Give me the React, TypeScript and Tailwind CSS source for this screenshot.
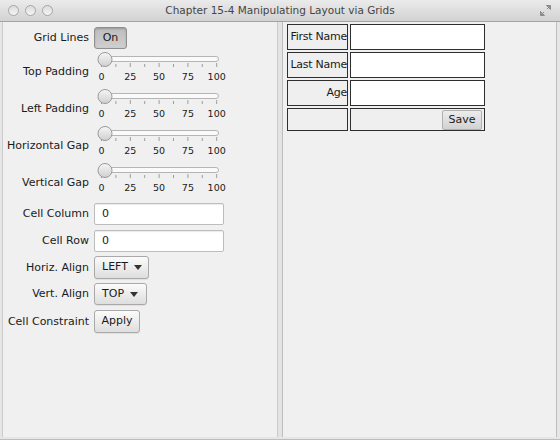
import React from 'react';

const font = "font-['DejaVu_Sans',sans-serif]";

const btn =
  'flex items-center rounded-[3px] border border-[#a9a9a9] bg-gradient-to-b from-[#fbfbfb] to-[#dedede] text-[11px] text-[#1a1a1a] shadow-[0_1px_0_rgba(0,0,0,0.06)]';

function TitleBar() {
  return (
    <div className="relative flex h-[22px] shrink-0 items-center justify-center border-b border-[#a3a3a3] bg-gradient-to-b from-[#ebebeb] to-[#d2d2d2]">
      <div className="absolute left-[8px] top-[5px] flex gap-[6px]">
        {[0, 1, 2].map((i) => (
          <span
            key={i}
            className="h-[11px] w-[11px] rounded-full border border-[#a6a6a6] bg-gradient-to-b from-[#dcdcdc] to-[#f4f4f4]"
          />
        ))}
      </div>
      <span className="text-[10.5px] text-[#454545]">Chapter 15-4 Manipulating Layout via Grids</span>
      <svg className="absolute right-[8px] top-[4px]" width="13" height="13" viewBox="0 0 13 13">
        <path d="M7.5 1.5 H11.5 V5.5 Z M11 2 L8 5" stroke="#8a8a8a" fill="#9a9a9a" strokeWidth="1" />
        <path d="M1.5 7.5 V11.5 H5.5 Z M2 11 L5 8" stroke="#8a8a8a" fill="#9a9a9a" strokeWidth="1" />
      </svg>
    </div>
  );
}

function Slider() {
  const labels = ['0', '25', '50', '75', '100'];
  return (
    <div className="relative h-[31px] w-[132px]">
      <svg className="absolute left-0 top-0" width="132" height="18" viewBox="0 0 132 18">
        <defs>
          <linearGradient id="thumb" x1="0" y1="0" x2="0" y2="1">
            <stop offset="0" stopColor="#f6f6f6" />
            <stop offset="1" stopColor="#cfcfcf" />
          </linearGradient>
        </defs>
        <rect x="6.5" y="4.5" width="118" height="5" rx="2.5" fill="#fafafa" stroke="#b5b5b5" />
        {[0, 1, 2, 3, 4, 5, 6, 7, 8].map((i) => {
          const x = 7.5 + i * 14.4;
          return (
            <line key={i} x1={x} x2={x} y1={i % 2 === 0 ? 11 : 12} y2="15" stroke="#9d9d9d" strokeWidth="1" />
          );
        })}
        <circle cx="11" cy="7.5" r="7" fill="url(#thumb)" stroke="#999" />
      </svg>
      {labels.map((l, i) => (
        <span
          key={l}
          className="absolute top-[19px] -translate-x-1/2 text-[9.5px] leading-[12px] text-[#1a1a1a]"
          style={{ left: 7.5 + i * 28.8 }}
        >
          {l}
        </span>
      ))}
    </div>
  );
}

function Label({ children, className = '' }: { children: React.ReactNode; className?: string }) {
  return <div className={`w-[86px] shrink-0 whitespace-nowrap text-right leading-[14px] ${className}`}>{children}</div>;
}

function TextField({ value }: { value: string }) {
  return (
    <div className="flex h-[22px] w-[130px] items-center rounded-[2px] border border-[#bdbdbd] bg-white pl-[7px] text-[11px] shadow-[inset_0_1px_1px_rgba(0,0,0,0.08)]">
      {value}
    </div>
  );
}

function Dropdown({ value, w }: { value: string; w: string }) {
  return (
    <div className={`${btn} ${w} h-full gap-[6px] pl-[7px]`}>
      <span>{value}</span>
      <svg width="8" height="5" viewBox="0 0 8 5">
        <path d="M0 0 H8 L4 5 Z" fill="#333" />
      </svg>
    </div>
  );
}

function LeftPane() {
  const sliders = ['Top Padding', 'Left Padding', 'Horizontal Gap', 'Vertical Gap'];
  return (
    <div className="flex w-[276px] shrink-0 flex-col border-x border-[#cbcbcb] bg-[#f0f0f0] text-[11px] text-[#1a1a1a]">
      <div className="mt-[5px] flex h-[22px] items-center gap-[5px]">
        <Label>Grid Lines</Label>
        <div className="flex h-full w-[33px] items-center justify-center rounded-[3px] border border-[#8f8f8f] bg-gradient-to-b from-[#bdbdbd] to-[#cfcfcf] text-[11px] shadow-[inset_0_1px_2px_rgba(0,0,0,0.2)]">
          On
        </div>
      </div>
      {sliders.map((s, i) => (
        <div key={s} className={`${i === 0 ? 'mt-[3px]' : 'mt-[6px]'} flex items-start gap-[5px]`}>
          <Label className="pt-[13px]">{s}</Label>
          <Slider />
        </div>
      ))}
      <div className="mt-[9px] flex items-center gap-[5px]">
        <Label>Cell Column</Label>
        <TextField value="0" />
      </div>
      <div className="mt-[5px] flex items-center gap-[5px]">
        <Label>Cell Row</Label>
        <TextField value="0" />
      </div>
      <div className="mt-[4px] flex h-[23px] items-center gap-[5px]">
        <Label>Horiz. Align</Label>
        <Dropdown value="LEFT" w="w-[55px]" />
      </div>
      <div className="mt-[4px] flex h-[22px] items-center gap-[5px]">
        <Label>Vert. Align</Label>
        <Dropdown value="TOP" w="w-[53px]" />
      </div>
      <div className="mt-[5px] flex h-[23px] items-center gap-[5px]">
        <Label>Cell Constraint</Label>
        <div className={`${btn} h-full w-[46px] justify-center`}>Apply</div>
      </div>
    </div>
  );
}

function RightPane() {
  const rows = ['First Name', 'Last Name', 'Age'];
  return (
    <div className="flex-1 border-x border-[#bdbdbd] bg-[#f0f0f0] pl-[4px] pt-[2px] text-[11px] text-[#1a1a1a]">
      <div className="grid w-[198px] grid-cols-[61px_135px] gap-[2px]">
        {rows.map((r) => (
          <React.Fragment key={r}>
            <div className="flex h-[26px] items-center justify-end whitespace-nowrap border border-[#2e2e2e] bg-[#efefef] text-[11px] tracking-[-0.25px]">
              {r}
            </div>
            <div className="h-[26px] border border-[#2e2e2e] bg-white" />
          </React.Fragment>
        ))}
        <div className="h-[23px] border border-[#2e2e2e] bg-[#efefef]" />
        <div className="flex h-[23px] items-end justify-end border border-[#2e2e2e] bg-[#efefef] pr-[2px]">
          <div className="flex h-[20px] w-[40px] items-center justify-center rounded-[2px] border border-[#b0b0b0] bg-gradient-to-b from-[#ececec] to-[#d2d2d2] text-[11px]">
            Save
          </div>
        </div>
      </div>
    </div>
  );
}

export default function App() {
  return (
    <div className={`flex h-[440px] w-[560px] flex-col overflow-hidden bg-[#e6e6e6] ${font}`}>
      <TitleBar />
      <div className="flex flex-1 border-b border-[#bdbdbd] pl-[2px] pr-[3px] pb-[2px]">
        <LeftPane />
        <div className="w-[4px] shrink-0 bg-[#e3e3e3]" />
        <RightPane />
      </div>
    </div>
  );
}
